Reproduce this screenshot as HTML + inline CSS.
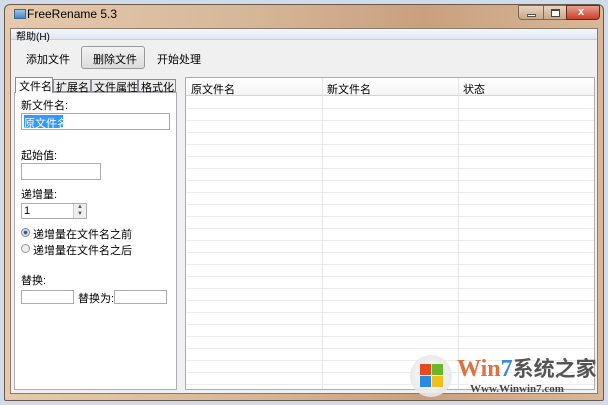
<!DOCTYPE html><html><head><style>
*{margin:0;padding:0;box-sizing:border-box}
body{width:608px;height:405px;background:#d0dcea;font-family:"Liberation Sans","Noto Sans CJK SC",sans-serif;font-size:11px;color:#000;position:relative;overflow:hidden}
.a{position:absolute}
.win{left:4px;top:4px;width:600px;height:397px;background:linear-gradient(90deg,#e6c9ad,#d7b79a 40%,#c9a07e 70%,#d8b898);border:1px solid #6b5a4a;border-radius:6px 6px 2px 2px}
.client{left:10px;top:28px;width:588px;height:366px;background:#f0f0f0;border:1px solid #8a7a6a}
.box{background:#fff;border:1px solid #abadb3}
.t{position:absolute;white-space:nowrap}
</style></head><body>
<div class="a win"></div>
<div class="a" style="left:14px;top:9px;width:12px;height:10px;background:linear-gradient(#9cc4e8,#4a86c0);border:1px solid #3a6a9a"></div>
<div class="t" style="left:27px;top:7px;font-size:12px">FreeRename 5.3</div>
<div class="a" style="left:518px;top:5px;width:26px;height:15px;border:1px solid #7a6a5a;border-radius:0 0 0 4px;background:linear-gradient(#e8d4c2,#c8a888)"><div class="a" style="left:8px;top:8px;width:9px;height:3px;background:#fff;border:1px solid #555"></div></div>
<div class="a" style="left:543px;top:5px;width:24px;height:15px;border:1px solid #7a6a5a;background:linear-gradient(#e8d4c2,#c8a888)"><div class="a" style="left:7px;top:3px;width:9px;height:8px;border:1px solid #444;border-top-width:2px;background:#fff"></div></div>
<div class="a" style="left:566px;top:5px;width:34px;height:15px;border:1px solid #6a2a1a;border-radius:0 0 4px 0;background:linear-gradient(#e8a090,#c8402a)"><div class="t" style="left:11px;top:0px;color:#fff;font-weight:bold;font-size:11px">x</div></div>
<div class="a client"></div>
<div class="a" style="left:11px;top:29px;width:586px;height:11px;background:linear-gradient(#f4f7fc,#dde6f2);border-bottom:1px solid #c8cdd6"></div>
<div class="t" style="left:16px;top:28px;font-size:10px">帮助(H)</div>
<div class="t" style="left:26px;top:51px">添加文件</div>
<div class="a" style="left:81px;top:46px;width:64px;height:23px;border:1px solid #9a9a9a;border-radius:3px;background:linear-gradient(#f2f2f2,#dcdcdc)"></div>
<div class="t" style="left:93px;top:51px">删除文件</div>
<div class="t" style="left:157px;top:51px">开始处理</div>
<div class="a box" style="left:14px;top:92px;width:163px;height:298px"></div>
<div class="a" style="left:15px;top:77px;width:38px;height:16px;background:#fff;border:1px solid #898c95;border-bottom:none"></div>
<div class="t" style="left:19px;top:78px">文件名</div>
<div class="a" style="left:53px;top:79px;width:38px;height:13px;background:#ececec;border:1px solid #898c95"></div>
<div class="t" style="left:56px;top:79px">扩展名</div>
<div class="a" style="left:91px;top:79px;width:47px;height:13px;background:#ececec;border:1px solid #898c95"></div>
<div class="t" style="left:94px;top:79px">文件属性</div>
<div class="a" style="left:138px;top:79px;width:38px;height:13px;background:#ececec;border:1px solid #898c95"></div>
<div class="t" style="left:141px;top:79px">格式化</div>
<div class="t" style="left:21px;top:97px">新文件名:</div>
<div class="a box" style="left:21px;top:113px;width:149px;height:17px;border-color:#7eb4ea"></div>
<div class="a" style="left:24px;top:115px;width:39px;height:13px;background:#3399ff"></div>
<div class="t" style="left:24px;top:115px;color:#fff">原文件名</div>
<div class="t" style="left:21px;top:147px">起始值:</div>
<div class="a box" style="left:21px;top:163px;width:80px;height:17px"></div>
<div class="t" style="left:21px;top:186px">递增量:</div>
<div class="a box" style="left:21px;top:203px;width:66px;height:16px"></div>
<div class="t" style="left:24px;top:205px">1</div>
<div class="a" style="left:73px;top:204px;width:13px;height:14px;background:#eee;border-left:1px solid #ccc;font-size:6px;line-height:7px;text-align:center;color:#555">▲<br>▼</div>
<div class="a" style="left:21px;top:228px;width:9px;height:9px;border-radius:50%;border:1px solid #888;background:radial-gradient(#2a5caa 30%,#dde 45%)"></div>
<div class="t" style="left:33px;top:226px">递增量在文件名之前</div>
<div class="a" style="left:21px;top:244px;width:9px;height:9px;border-radius:50%;border:1px solid #999;background:#eee"></div>
<div class="t" style="left:33px;top:242px">递增量在文件名之后</div>
<div class="t" style="left:21px;top:272px">替换:</div>
<div class="a box" style="left:21px;top:290px;width:53px;height:14px"></div>
<div class="t" style="left:78px;top:290px">替换为:</div>
<div class="a box" style="left:114px;top:290px;width:53px;height:14px"></div>
<div class="a box" style="left:185px;top:77px;width:410px;height:313px;background:#fff repeating-linear-gradient(#fff 0 11px,#ececec 11px 12px);background-position:0 19px"></div>
<div class="a" style="left:186px;top:78px;width:408px;height:18px;background:linear-gradient(#fff,#f4f4f4);border-bottom:1px solid #d5d5d5"></div>
<div class="a" style="left:322px;top:78px;width:1px;height:311px;background:#e6e6e6"></div>
<div class="a" style="left:458px;top:78px;width:1px;height:311px;background:#e6e6e6"></div>
<div class="t" style="left:191px;top:81px">原文件名</div>
<div class="t" style="left:327px;top:81px">新文件名</div>
<div class="t" style="left:463px;top:81px">状态</div>
<div class="a" style="left:410px;top:355px;width:42px;height:42px;border-radius:50%;background:radial-gradient(#fff,#ddd);opacity:.9"></div>
<div class="a" style="left:420px;top:364px;width:11px;height:11px;background:#e84a20"></div><div class="a" style="left:432px;top:364px;width:11px;height:11px;background:#6ab82a"></div>
<div class="a" style="left:420px;top:376px;width:11px;height:11px;background:#2a8ae0"></div><div class="a" style="left:432px;top:376px;width:11px;height:11px;background:#f0c020"></div>
<div class="t" style="left:457px;top:353px;font-size:24px;font-weight:bold;color:#e07040;font-family:'Liberation Serif',serif">Win<span style="color:#3a8ad8">7</span><span style="color:#555;font-family:'Noto Sans CJK SC',sans-serif;font-size:21px">系统之家</span></div>
<div class="t" style="left:470px;top:383px;font-size:11px;font-weight:bold;color:#444;font-family:'Liberation Serif',serif">Www.Winwin7.com</div>
</body></html>
